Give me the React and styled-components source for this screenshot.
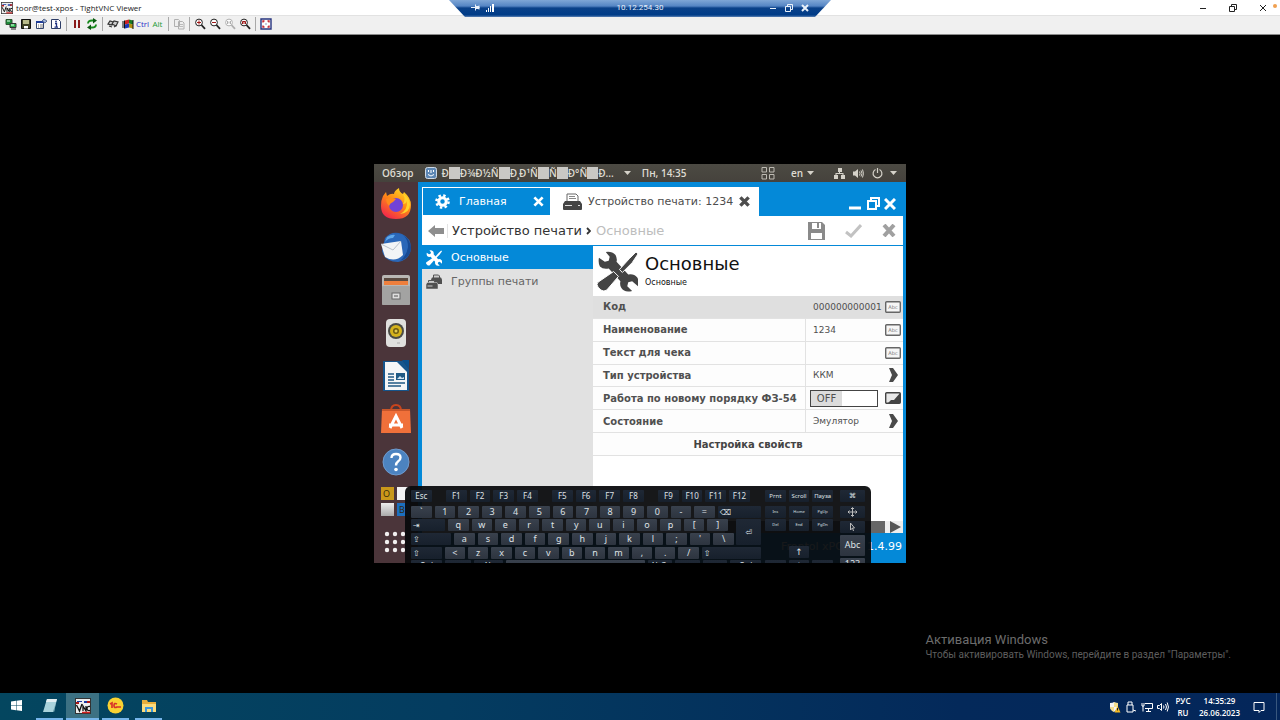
import React, { useState } from "react";
import styled, { createGlobalStyle } from "styled-components";

const GlobalStyle = createGlobalStyle`
  * {
    box-sizing: border-box;
  }
  body {
    margin: 0;
    background: #000;
    font-family: "Open Sans", "Noto Sans", sans-serif;
  }
  button, input {
    margin: 0;
    padding: 0;
    border: 0;
    background: none;
    color: inherit;
    font: inherit;
  }
  svg {
    display: block;
    flex: none;
  }
`;

/* ---------- viewer window ---------- */

const Page = styled.div`
  position: relative;
  display: flex;
  flex-direction: column;
  min-height: 100vh;
  overflow: hidden;
`;

const TitleBar = styled.header`
  display: flex;
  align-items: center;
  height: 15px;
  padding: 0 3px 0 1px;
  background: #fff;
  color: #222;
  font-size: 8px;
  line-height: 15px;
`;

const TitleText = styled.span`
  flex: 1;
  padding-left: 3px;
`;

const BusyDot = styled.span`
  align-self: flex-start;
  width: 4px;
  height: 4px;
  margin: 4px 0 0 -5px;
  border-radius: 50%;
  background: #f0a050;
`;

const WindowButton = styled.button`
  display: flex;
  align-items: center;
  justify-content: center;
  width: ${(props) => props.$width || "30px"};
  height: 15px;
`;

const Toolbar = styled.div`
  display: flex;
  align-items: center;
  height: 20px;
  padding: 0 3px 2px;
  background: #f0f0f0;
  border-top: 1px solid #e2e2e2;
  border-bottom: 1px solid #8a8a8a;
`;

const ToolButton = styled.button`
  display: flex;
  align-items: center;
  justify-content: center;
  width: 15px;
  height: 16px;
  color: ${(props) => props.$color || "#000"};
  font-size: 8px;
  line-height: 16px;
`;

const Separator = styled.span`
  width: 6px;
  height: 14px;
  background: linear-gradient(#a8a8a8, #a8a8a8) center / 1px 100% no-repeat;
`;

const ConnectionBar = styled.div`
  position: absolute;
  top: 0;
  left: 50%;
  display: flex;
  align-items: center;
  gap: 4px;
  width: 382px;
  height: 17px;
  padding: 0 20px 2px;
  transform: translateX(-50%);
  clip-path: polygon(0 0, 100% 0, 366px 100%, 16px 100%);
  background: linear-gradient(#7fa6d6 0, #5585c4 6px, #0a4189 8px, #003c88 15px, #5c82b4 17px);
  color: #e8f0fa;
  font-family: Roboto, sans-serif;
  font-size: 8px;
`;

const Address = styled.span`
  flex: 1;
  padding-left: 18px;
  text-align: center;
`;

const Screen = styled.main`
  display: flex;
  flex: 1;
  align-items: center;
  justify-content: center;
  padding-bottom: 1px;
  background: #000;
`;

const Watermark = styled.div`
  position: absolute;
  right: 49px;
  bottom: 58px;
  color: #5e5e5e;
  font-family: Roboto, sans-serif;
  font-size: 10px;
  line-height: 15px;
`;

const WatermarkTitle = styled.div`
  color: #6c6c6c;
  font-size: 13px;
`;

/* ---------- remote desktop ---------- */

const Remote = styled.section`
  position: relative;
  display: flex;
  flex-direction: column;
  width: 532px;
  overflow: hidden;
  background: #0489d8;
`;

const Panel = styled.div`
  display: flex;
  align-items: center;
  height: 18px;
  padding: 0 9px 0 8px;
  background: linear-gradient(#4c4a43, #45423c);
  color: #dedbd2;
  font-size: 10px;
  font-weight: 600;
`;

const PanelButton = styled.button`
  display: flex;
  align-items: center;
  gap: 4px;
  height: 18px;
  margin-left: ${(props) => props.$gap || "0"};
  white-space: nowrap;
`;

const AppName = styled.span`
  display: flex;
  align-items: center;
`;

const Missing = styled.span`
  width: 11px;
  height: 12px;
  background: #c9c8c4;
`;

const Desktop = styled.div`
  display: flex;
  height: 381px;
`;

const Dock = styled.nav`
  display: flex;
  flex-direction: column;
  align-items: center;
  width: 44px;
  background: #4b353a;
`;

const DockButton = styled.button`
  display: flex;
  align-items: center;
  justify-content: center;
  width: 44px;
  height: 43px;
`;

const Workspaces = styled.div`
  display: grid;
  grid-template-columns: 13px 13px;
  grid-auto-rows: 13px;
  gap: 3px;
  align-self: flex-start;
  margin: 4px 0 0 7px;
`;

const Workspace = styled.span`
  background: ${(props) => props.$color};
  color: #33270a;
  font-size: 9px;
  line-height: 13px;
  padding-left: 2px;
`;

const Window = styled.div`
  display: flex;
  flex: 1;
  flex-direction: column;
  min-width: 0;
  padding: 5px 3px 0 4px;
  background: #0489d8;
  font-family: "DejaVu Sans", sans-serif;
`;

const TabStrip = styled.div`
  display: flex;
  height: 29px;
`;

const Tab = styled.div`
  display: flex;
  align-items: center;
  width: ${(props) => props.$width};
  padding: ${(props) => (props.$active ? "0 8px 0 10px" : "0 6px 0 12px")};
  border: 1px solid #fff;
  background: ${(props) => (props.$active ? "#fff" : "#0489d8")};
  color: ${(props) => (props.$active ? "#4d4d4d" : "#fff")};
  font-size: 11px;
`;

const TabTitle = styled.button`
  display: flex;
  flex: 1;
  align-items: center;
  gap: ${(props) => props.$gap};
  white-space: nowrap;
`;

const WindowControls = styled.div`
  display: flex;
  flex: 1;
  align-items: center;
  justify-content: flex-end;
  gap: 4px;
  padding: 4px 7px 0 0;
`;

const Breadcrumbs = styled.div`
  display: flex;
  align-items: center;
  height: 29px;
  margin-bottom: 1px;
  padding: 0 7px 0 6px;
  background: #fff;
  color: #333;
  font-size: 13px;
`;

const Crumb = styled.a`
  color: ${(props) => (props.$muted ? "#bdbdbd" : "#333")};
  text-decoration: none;
`;

const BackButton = styled.button`
  padding-right: 3px;
  margin-right: 4px;
  border-right: 1px solid #e3e3e3;
`;

const CrumbArrow = styled.span`
  display: flex;
  justify-content: center;
  width: 14px;
`;

const Actions = styled.div`
  display: flex;
  align-items: center;
  gap: 20px;
  margin-left: auto;
`;

const Body = styled.div`
  display: flex;
  flex: 1;
`;

const Sidebar = styled.nav`
  width: 171px;
  background: #e1e1e1;
`;

const SidebarItem = styled.a`
  display: flex;
  align-items: center;
  gap: 9px;
  height: ${(props) => (props.$active ? "23px" : "25px")};
  padding-left: 4px;
  background: ${(props) => (props.$active ? "#0489d8" : "transparent")};
  color: ${(props) => (props.$active ? "#fff" : "#666")};
  font-size: 11px;
  text-decoration: none;
`;

const Content = styled.div`
  display: flex;
  flex: 1;
  flex-direction: column;
  background: #fff;
`;

const Heading = styled.div`
  display: flex;
  align-items: center;
  gap: 7px;
  height: 50px;
  padding-left: 4px;
  color: #111;
`;

const PageTitle = styled.h1`
  margin: 0;
  font-size: 18px;
  font-weight: 400;
  line-height: 24px;
`;

const Subtitle = styled.div`
  font-size: 8px;
  line-height: 14px;
`;

const Rows = styled.form`
  display: grid;
  grid-template-rows: repeat(7, 1fr);
  height: 160px;
`;

const Row = styled.div`
  display: grid;
  grid-template-columns: 1fr 98px;
  border-bottom: 1px solid #e2e2e2;
  background: ${(props) => (props.$selected ? "#dfdfdf" : "#fdfdfd")};
  color: #505050;
`;

const RowLabel = styled.label`
  align-self: center;
  padding-left: 10px;
  font-size: 10px;
  font-weight: 700;
`;

const Cell = styled.div`
  display: flex;
  align-items: center;
  justify-content: space-between;
  padding: 0 2px 0 7px;
  border-left: 1px solid ${(props) => (props.$selected ? "#dfdfdf" : "#e2e2e2")};
  font-size: 9px;
`;

const ValueInput = styled.input`
  width: 70px;
  outline: none;
`;

const PickerButton = styled.button`
  display: flex;
  flex: 1;
  align-items: center;
  justify-content: space-between;
  padding-right: 2px;
`;

const Switch = styled.span`
  position: relative;
  display: flex;
  width: 68px;
  height: 17px;
  margin-left: -3px;
  border: 1px solid #444;
  background: #fff;
`;

const SwitchInput = styled.input`
  position: absolute;
  inset: 0;
  width: 100%;
  height: 100%;
  opacity: 0;
`;

const SwitchText = styled.span`
  width: 31px;
  margin-left: ${(props) => (props.$on ? "auto" : "0")};
  background: #dcdcdc;
  font-size: 10px;
  line-height: 15px;
  text-align: center;
`;

const PropertiesButton = styled.button`
  border-bottom: 1px solid #e2e2e2;
  background: #fdfdfd;
  color: #444;
  font-size: 10px;
  font-weight: 700;
`;

const ScrollBar = styled.div`
  display: flex;
  justify-content: flex-end;
  gap: 2px;
  height: 12px;
  margin-top: auto;
  background: #eee;
`;

const Thumb = styled.span`
  width: 160px;
  background: #666;
`;

const Footer = styled.footer`
  height: 30px;
  padding-right: 1px;
  color: #fff;
  font-size: 11px;
  line-height: 28px;
  text-align: right;
`;

/* ---------- on-screen keyboard ---------- */

const Keyboard = styled.div`
  position: absolute;
  top: 322px;
  left: 31px;
  display: flex;
  align-items: flex-start;
  gap: 4px;
  width: 466px;
  height: 90px;
  padding: 4px 6px;
  border-radius: 6px;
  background: rgba(9, 10, 12, 0.94);
  font-family: "Noto Sans", "DejaVu Sans", sans-serif;
`;

const KeyBlock = styled.div`
  display: flex;
  flex-direction: column;
  justify-content: space-between;
  flex: ${(props) => (props.$width ? "none" : 1)};
  width: ${(props) => props.$width || "auto"};
  height: ${(props) => props.$height || "82px"};
  margin-left: ${(props) => props.$gap || "0"};
`;

const KeyRow = styled.div`
  display: flex;
  gap: 3px;
  padding-right: ${(props) => props.$end || "0"};
  margin-bottom: ${(props) => (props.$first ? "2px" : "0")};
`;

const KeySpace = styled.span`
  flex: ${(props) => props.$grow} 1 0;
  height: 12px;
`;

const Key = styled.button`
  flex: ${(props) => props.$grow || 1} 1 0;
  min-width: 0;
  height: ${(props) => props.$height || "12px"};
  padding: ${(props) => (props.$left ? "0 0 0 2px" : "0")};
  border-radius: 1px;
  background: ${(props) => (props.$dark ? "linear-gradient(#1f2835, #17202c)" : "linear-gradient(#39414d, #2d343f)")};
  color: #dfe2e6;
  font-size: ${(props) => props.$size || "9px"};
  line-height: 12px;
  text-align: ${(props) => (props.$left ? "left" : "center")};
  white-space: nowrap;
  overflow: hidden;
`;

const EnterGroup = styled.div`
  display: flex;
  gap: 2px;
`;

/* ---------- windows taskbar ---------- */

const Taskbar = styled.footer`
  display: flex;
  height: 27px;
  background: linear-gradient(90deg, #04465f, #043c60 35%, #04295a 75%, #04265a);
  color: #fff;
`;

const TaskButton = styled.button`
  display: flex;
  align-items: center;
  justify-content: center;
  width: ${(props) => (props.$active ? "33px" : "27px")};
  margin: 0 ${(props) => (props.$active ? "0" : "3px")};
  border-bottom: 2px solid ${(props) => (props.$open ? "#76b5ea" : "transparent")};
  background: ${(props) => (props.$active ? "#3c7183" : "transparent")};
`;

const Tray = styled.div`
  display: flex;
  align-items: center;
  gap: 4px;
  margin-left: auto;
  padding-right: 1px;
  font-size: 8px;
  line-height: 12px;
  text-align: center;
`;

const TrayText = styled.div`
  width: ${(props) => props.$width};
  font-weight: 600;
`;

const ShowDesktop = styled.button`
  width: 3px;
  height: 27px;
  border-left: 1px solid #38577e;
`;

/* ---------- drawings ---------- */

const VncLogo = ({ size = 12 }) => (
  <svg width={size} height={size} viewBox="0 0 16 16">
    <rect width="16" height="16" fill="#eee" />
    <path d="M0 0h16v16H0zM1 1v14h14V1z" fill="#333" fillRule="evenodd" />
    <path d="M2 3h5v1H2zm7 0h5v2H9z" fill="#1c3aa0" />
    <path d="M1 5h3M12 4h3" stroke="#b01818" strokeWidth="2" />
    <path d="M1.500 7l3 6 2.500-7M8 13V8l3 5V8M15 8.500q-3-.500-3 2t3 2" fill="none" stroke="#111" strokeWidth="1.300" />
    <path d="M7 14.500h8" stroke="#d42222" strokeWidth="1.500" />
  </svg>
);

const Glyph = ({ size = 12, children, box = 12 }) => (
  <svg width={size} height={size} viewBox={`0 0 ${box} ${box}`} fill="none" stroke="currentColor">
    {children}
  </svg>
);

const NewConnectionIcon = () => (
  <Glyph>
    <path d="M1 1.500h6v5H1z" fill="#1c8a3a" stroke="#2f5530" />
    <path d="M5 5.500h6v4H5z" fill="#27b04a" stroke="#333" />
    <path d="M2 3h3M6 7h3" stroke="#eaffea" />
    <path d="M6 11h5" stroke="#222" />
  </Glyph>
);

const SaveIcon = () => (
  <Glyph>
    <path d="M1.500 1.500h9v9h-9z" fill="#3e4022" stroke="#111" />
    <path d="M3 2h6v4H3z" fill="#b9bb8a" stroke="none" />
    <path d="M4 8h4v2.500H4z" fill="#fff" stroke="none" />
  </Glyph>
);

const OptionsIcon = () => (
  <Glyph>
    <path d="M1.500 3.500h7v7h-7z" fill="#fff" stroke="#34466e" />
    <path d="M1 4h8" stroke="#1d3b9a" strokeWidth="2" />
    <path d="M3 7h1m1 0h3M3 9h1m1 0h3" stroke="#777" />
    <path d="M7 3l2-2 3 2-2 2z" fill="#9cb0d8" stroke="#34466e" strokeWidth=".7" />
  </Glyph>
);

const InfoIcon = () => (
  <Glyph>
    <path d="M1.500 1.500h7l2 2v7h-9z" fill="#fff" stroke="#2c3c66" />
    <path d="M5 5.500h1.500v3.500M4.500 9.200h3.500" stroke="#1d2f80" strokeWidth="1.300" />
    <circle cx="6" cy="3.500" r=".9" fill="#1d2f80" stroke="none" />
  </Glyph>
);

const RefreshIcon = () => (
  <Glyph>
    <path d="M2 5.500q0-3 4-3h2" stroke="#168a1c" strokeWidth="1.800" />
    <path d="M10 6.500q0 3-4 3H4" stroke="#168a1c" strokeWidth="1.800" />
    <path d="M7 0l4 2.500-4 3zM5 6.500v5.500L1 9.500z" fill="#0c5a12" stroke="none" />
  </Glyph>
);

const KeysIcon = () => (
  <Glyph>
    <path d="M1 6l2-3 3 1-1 3zM5 6l2-3 4 1-2 4zM2 8l3 1M7 9l3-2" stroke="#333" strokeWidth="1.200" fill="#ccc" />
  </Glyph>
);

const FlagIcon = () => (
  <Glyph>
    <path d="M3 2.500l4-1v4l-4 1z" fill="#c22" stroke="none" />
    <path d="M7 1.500l4 1v4l-4-1z" fill="#177a22" stroke="none" />
    <path d="M3 6.500l4-1v4l-4 1z" fill="#1c36b4" stroke="none" />
    <path d="M7 5.500l4 1v4l-4-1z" fill="#b08d10" stroke="none" />
    <path d="M1 3v7M2.500 2.500v8M11 2v9" stroke="#111" />
  </Glyph>
);

const CopyIcon = () => (
  <Glyph>
    <path d="M1.500 1.500h4l1 1v6h-5zM5.500 3.500h4l1.500 1.500v6H5.500z" fill="#eee" stroke="#b0b0b0" />
    <path d="M7 6.500h3M7 8.500h3" stroke="#bbb" />
  </Glyph>
);

const LensIcon = ({ color = "#222", mark }) => (
  <Glyph>
    <circle cx="5" cy="4.500" r="3.400" fill="#fff" stroke={color} />
    <path d="M7.500 7L11 10.800" stroke={color} strokeWidth="1.800" />
    <path d={mark} stroke={color === "#222" ? "#a01818" : color} />
  </Glyph>
);

const FullScreenIcon = () => (
  <Glyph>
    <path d="M1 1h10v10H1z" fill="#fff" stroke="#26337e" strokeWidth="1.400" />
    <path d="M3 4.500V3h1.500M7.500 3H9v1.500M9 7.500V9H7.500M4.500 9H3V7.500" stroke="#c41f2d" strokeWidth="1.400" />
    <path d="M5.500 6h1" stroke="#26337e" />
  </Glyph>
);

const Minimize = () => (
  <Glyph size={8} box={8}>
    <path d="M1 4.500h6" />
  </Glyph>
);

const Restore = () => (
  <Glyph size={8} box={8}>
    <path d="M.5 2.500h5v5h-5zM2.500 2.500v-2h5v5h-2" />
  </Glyph>
);

const Cross = ({ size = 8, weight = 1 }) => (
  <Glyph size={size} box={8}>
    <path d="M1 1l6 6M7 1L1 7" strokeWidth={weight} />
  </Glyph>
);

const Caret = () => (
  <svg width="7" height="4" viewBox="0 0 7 4">
    <path d="M0 0h7L3.500 4z" fill="#d5d2c9" />
  </svg>
);

const GearIcon = () => (
  <svg width="15" height="15" viewBox="0 0 16 16" fill="none" stroke="#fff">
    <circle cx="8" cy="8" r="4" strokeWidth="3.200" />
    <circle cx="8" cy="8" r="6.500" strokeWidth="2.600" strokeDasharray="2.600 2.500" />
  </svg>
);

const PrinterIcon = () => (
  <svg width="21" height="18" viewBox="0 0 21 18">
    <path d="M5 8V1h9l2 2v5" fill="#fff" stroke="#666" />
    <path d="M7 3.500h6M7 5.500h7" stroke="#888" />
    <path d="M3 8h15l2 3v5q0 1-1 1H2q-1 0-1-1v-5z" fill="#444" />
    <path d="M3 12.500h7M16 12.500h2" stroke="#ddd" />
  </svg>
);

const PrintersIcon = () => (
  <svg width="16" height="16" viewBox="0 0 16 16">
    <path d="M7.500 4V1h5l1 1v2" fill="#ccc" stroke="#555" />
    <path d="M6 3.500h9l1 2V10H5V5.500z" fill="#505050" />
    <path d="M2.500 9V6.500h6V9" fill="#ccc" stroke="#555" />
    <path d="M1 8.500h10l1 2V15H0v-4.500z" fill="#505050" stroke="#e1e1e1" strokeWidth=".5" />
    <path d="M1.500 12h5" stroke="#ccc" />
  </svg>
);

const ToolsIcon = ({ size, color, edge = "none" }) => (
  <svg width={size} height={size} viewBox="0 0 42 42" fill={color}>
    <path d="M2 7l6 4 4-1 1-4-4-5q6-1 10 3 2 4 1 7l12 13q6-1 9 3 3 4 1 9l-6-5-4 1-1 4 5 5q-8 2-11-3-2-3-1-7L12 18q-6 1-9-2-2-4-1-9z" />
    <path d="M40 1l2 2-6 9-10 10-3-3 10-11z" stroke={edge} />
    <path d="M17 21l5 5-12 14q-3 2-6 0l-3-3q-2-3 0-5z" stroke={edge} />
  </svg>
);

const BackIcon = () => (
  <svg width="16" height="14" viewBox="0 0 16 14">
    <path d="M0 7l7-6v3h9v6H7v3z" fill="#8e8e8e" />
  </svg>
);

const DiskIcon = () => (
  <svg width="17" height="18" viewBox="0 0 17 18">
    <path d="M0 0h14l3 3v15H0z" fill="#8a8a8a" />
    <path d="M4 1h9v6H4zM3 11h11v6H3z" fill="#fff" />
    <path d="M9 1h2v5H9z" fill="#8a8a8a" />
  </svg>
);

const CheckIcon = () => (
  <svg width="17" height="14" viewBox="0 0 17 14">
    <path d="M1 8l5 4L16 1" fill="none" stroke="#c2c2c2" strokeWidth="3" />
  </svg>
);

const ChevronIcon = () => (
  <svg width="10" height="14" viewBox="0 0 10 14">
    <path d="M0 0h4l5 7-5 7H0l3-7z" fill="#4a4a4a" />
  </svg>
);

const AbcIcon = () => (
  <svg width="16" height="12" viewBox="0 0 16 12">
    <rect x=".7" y=".7" width="14.600" height="10.600" rx="1" fill="#f6f6f6" stroke="#666" strokeWidth="1.400" />
    <text x="8" y="8" fontSize="5" textAnchor="middle" fill="#777">Abc</text>
  </svg>
);

const ToggleIcon = () => (
  <svg width="16" height="12" viewBox="0 0 16 12">
    <rect x=".7" y=".7" width="14.600" height="10.600" rx="1" fill="#e8e8e8" stroke="#444" strokeWidth="1.400" />
    <path d="M15 1v10H3l3-3h3z" fill="#444" />
  </svg>
);

const FirefoxIcon = () => (
  <svg width="32" height="32" viewBox="0 0 32 32">
    <defs>
      <linearGradient id="fx" x1=".8" y1="0" x2=".2" y2="1">
        <stop offset="0" stopColor="#ffe226" />
        <stop offset=".45" stopColor="#ff8a16" />
        <stop offset="1" stopColor="#f0204f" />
      </linearGradient>
    </defs>
    <path d="M3 8l3-4 1 4q4-3 7-2 0-3 5-6 0 4 4 6l1-2q7 6 7 13 0 14-15 14T1 18q0-6 2-10z" fill="url(#fx)" />
    <circle cx="16" cy="17" r="7" fill="#7142d6" />
    <path d="M6 11q5-2 10 0l-3 3q-3 1-4 4-3-3-3-7z" fill="#ff8a1c" />
    <path d="M23 6q3 5 0 10 3 0 4-3 1 9-7 13 10-1 10-10-1-7-7-10z" fill="#ffd22b" />
  </svg>
);

const MailIcon = () => (
  <svg width="32" height="32" viewBox="0 0 32 32">
    <path d="M5 7Q12-1 22 3q9 4 9 14-1 12-13 14Q5 31 2 20z" fill="#2a67b8" />
    <path d="M14 2q14 0 14 14-1 8-8 14 11-3 11-14Q29 3 14 2z" fill="#184a94" />
    <path d="M7 6q5-3 8-2l-2 3q-5 0-8 4z" fill="#5fa8ea" />
    <path d="M1 13l20-3 2 14q-8 8-18 2z" fill="#f2f4f6" />
    <path d="M1 13l12 6 8-9" fill="none" stroke="#b7c0ca" />
  </svg>
);

const FilesIcon = () => (
  <svg width="30" height="32" viewBox="0 0 30 32">
    <rect x="1" y="1" width="28" height="30" rx="2" fill="#b9b7b4" />
    <path d="M3 4h24v3H3z" fill="#5b4a40" />
    <path d="M3 7h24v4H3z" fill="#ee7f3d" />
    <rect x="1" y="12" width="28" height="19" rx="1" fill="#a3a3a2" />
    <rect x="11" y="19" width="8" height="6" fill="#dedede" stroke="#666" />
    <path d="M13 22h4" stroke="#555" />
  </svg>
);

const SpeakerIcon = () => (
  <svg width="22" height="30" viewBox="0 0 22 30">
    <rect x="1" y="1" width="20" height="28" rx="4" fill="#e0e0de" />
    <circle cx="11" cy="13" r="8" fill="#4a4b46" />
    <circle cx="11" cy="13" r="6" fill="#d4b21c" />
    <circle cx="11" cy="13" r="3" fill="#6e5c12" />
    <circle cx="11" cy="13" r="1.500" fill="#e4cc50" />
    <path d="M12 25h3" stroke="#aaa" />
  </svg>
);

const WriterIcon = () => (
  <svg width="28" height="32" viewBox="0 0 28 32">
    <path d="M1 1h20l6 8v22H1z" fill="#16558c" />
    <path d="M20 0h7v9z" fill="#0b4f8c" />
    <path d="M3 2h12l10 10v18H3z" fill="#f5f6f7" />
    <path d="M6 14h6M6 17h6M6 20h6M6 23h17M6 26h13" stroke="#205a85" strokeWidth="1.600" />
    <path d="M14 13h9v7h-9z" fill="#205a85" />
    <path d="M15 19l3-3 2 2 2-1v2z" fill="#d2e4f2" />
  </svg>
);

const StoreIcon = () => (
  <svg width="30" height="32" viewBox="0 0 30 32">
    <path d="M10 8q0-6 5-6t5 6" fill="none" stroke="#c9441c" strokeWidth="2" />
    <path d="M1 6h28l1 24H0z" fill="#f0703a" />
    <path d="M1 6h28v2H1z" fill="#c7562a" />
    <path d="M9 25l6-12 6 12M8 22h14" fill="none" stroke="#fff" strokeWidth="3" />
  </svg>
);

const HelpIcon = () => (
  <svg width="28" height="28" viewBox="0 0 28 28">
    <circle cx="14" cy="14" r="13" fill="#4c83c0" stroke="#6f9bce" />
    <path d="M9.500 10q0-4 4.500-4t4.500 3.500q0 2.500-2.500 4-2 1.500-2 4" fill="none" stroke="#fff" strokeWidth="2.400" />
    <circle cx="14" cy="21.500" r="1.800" fill="#fff" />
  </svg>
);

const AppsGridIcon = () => (
  <svg width="22" height="22" viewBox="0 0 22 22" fill="#f2f0f0">
    {[3, 11, 19].map((y) =>
      [3, 11, 19].map((x) => <circle key={`${x}-${y}`} cx={x} cy={y} r="2.200" />)
    )}
  </svg>
);

const AppsWrap = styled.button`
  align-self: flex-start;
  margin: 15px 0 0 10px;
`;

/* ---------- parts ---------- */

const ViewerToolbar = () => (
  <Toolbar>
    <ToolButton aria-label="New connection"><NewConnectionIcon /></ToolButton>
    <ToolButton aria-label="Save"><SaveIcon /></ToolButton>
    <ToolButton aria-label="Options"><OptionsIcon /></ToolButton>
    <ToolButton aria-label="Info"><InfoIcon /></ToolButton>
    <Separator />
    <ToolButton aria-label="Pause">
      <Glyph><path d="M4 2v8M8 2v8" stroke="#8a1a1a" strokeWidth="2" /></Glyph>
    </ToolButton>
    <ToolButton aria-label="Refresh"><RefreshIcon /></ToolButton>
    <Separator />
    <ToolButton aria-label="Ctrl Alt Del"><KeysIcon /></ToolButton>
    <ToolButton aria-label="Start"><FlagIcon /></ToolButton>
    <ToolButton $color="#2a30c8">Ctrl</ToolButton>
    <ToolButton $color="#1c9a35">Alt</ToolButton>
    <Separator />
    <ToolButton aria-label="Transfer files"><CopyIcon /></ToolButton>
    <Separator />
    <ToolButton aria-label="Zoom in"><LensIcon mark="M3 4.500h4M5 2.500v4" /></ToolButton>
    <ToolButton aria-label="Zoom out"><LensIcon mark="M3 4.500h4" /></ToolButton>
    <ToolButton aria-label="Zoom 100%"><LensIcon color="#b0b0b0" mark="M3.500 3v3M5 3.500v2M6.500 3v3" /></ToolButton>
    <ToolButton aria-label="Zoom auto"><LensIcon mark="M3.500 6V3.500h3V6M3.500 5h3" /></ToolButton>
    <Separator />
    <ToolButton aria-label="Full screen"><FullScreenIcon /></ToolButton>
  </Toolbar>
);

const TopPanel = () => (
  <Panel>
    <PanelButton>Обзор</PanelButton>
    <PanelButton $gap="12px">
      <svg width="12" height="12" viewBox="0 0 12 12">
        <rect x=".5" y=".5" width="11" height="11" rx="2" fill="#5d87b4" stroke="#cfdbe8" />
        <path d="M3.500 3v2M8.500 3v2M6 3v3M3 7.500q3 3 6 0" stroke="#fff" fill="none" />
      </svg>
      <AppName>
        Ð<Missing />Ð¾Ð½Ñ<Missing />Ð¸Ð¹Ñ<Missing />Ñ<Missing />Ð°Ñ<Missing />Ð...
      </AppName>
    </PanelButton>
    <PanelButton $gap="10px" aria-label="App menu"><Caret /></PanelButton>
    <PanelButton $gap="11px">Пн, 14:35</PanelButton>
    <PanelButton $gap="auto" aria-label="Workspaces">
      <svg width="14" height="13" viewBox="0 0 14 13" fill="none" stroke="#bdbab2">
        <path d="M1 .5h4.500v4.500H1zM8.500.5H13v4.500H8.500zM1 7.500h4.500V12H1zM8.500 7.500H13V12H8.500z" />
      </svg>
    </PanelButton>
    <PanelButton $gap="16px">en <Caret /></PanelButton>
    <PanelButton $gap="20px" aria-label="System">
      <svg width="11" height="11" viewBox="0 0 11 11" fill="#d5d2c9">
        <path d="M4 0h4v4H4zM0 7h4v4H0zM7 7h4v4H7zM1.500 5h8v2h-1V6h-6v1h-1zM5 4h1v2H5z" />
      </svg>
    </PanelButton>
    <PanelButton $gap="8px" aria-label="Volume">
      <svg width="11" height="11" viewBox="0 0 11 11" fill="none" stroke="#d5d2c9">
        <path d="M0 3.500h2l3-2.500v9L2 7.500H0z" fill="#d5d2c9" stroke="none" />
        <path d="M6.500 3.500q1.200 2 0 4M8 2.500q2 3 0 6M9.500 1.500q2 4 0 8" />
      </svg>
    </PanelButton>
    <PanelButton $gap="8px" aria-label="Power">
      <svg width="11" height="11" viewBox="0 0 11 11" fill="none" stroke="#d5d2c9" strokeWidth="1.200">
        <path d="M3.500 1.500a4.400 4.400 0 1 0 4 0M5.500 0v5" />
      </svg>
    </PanelButton>
    <PanelButton $gap="7px" aria-label="System menu"><Caret /></PanelButton>
  </Panel>
);

const dockApps = [
  { name: "Firefox", Icon: FirefoxIcon },
  { name: "Thunderbird", Icon: MailIcon },
  { name: "Files", Icon: FilesIcon },
  { name: "Rhythmbox", Icon: SpeakerIcon },
  { name: "Writer", Icon: WriterIcon },
  { name: "Software", Icon: StoreIcon },
  { name: "Help", Icon: HelpIcon },
];

const SideDock = () => (
  <Dock>
    {dockApps.map(({ name, Icon }) => (
      <DockButton key={name} aria-label={name}><Icon /></DockButton>
    ))}
    <Workspaces>
      <Workspace $color="#c9981a">O</Workspace>
      <Workspace $color="#f4f4f4" />
      <Workspace $color="linear-gradient(#eee, #aaa)" />
      <Workspace $color="#1b6fc0">B</Workspace>
    </Workspaces>
    <AppsWrap aria-label="Applications"><AppsGridIcon /></AppsWrap>
  </Dock>
);

const InputRow = ({ id, label, value, selected }) => (
  <Row $selected={selected}>
    <RowLabel htmlFor={id}>{label}</RowLabel>
    <Cell $selected={selected}>
      <ValueInput id={id} defaultValue={value} />
      <AbcIcon />
    </Cell>
  </Row>
);

const PickerRow = ({ id, label, value }) => (
  <Row>
    <RowLabel htmlFor={id}>{label}</RowLabel>
    <Cell>
      <PickerButton type="button" id={id}>{value}<ChevronIcon /></PickerButton>
    </Cell>
  </Row>
);

const DeviceForm = () => {
  const [on, setOn] = useState(false);

  return (
    <Rows>
      <InputRow id="code" label="Код" value="000000000001" selected />
      <InputRow id="name" label="Наименование" value="1234" />
      <InputRow id="receipt" label="Текст для чека" value="" />
      <PickerRow id="type" label="Тип устройства" value="ККМ" />
      <Row>
        <RowLabel htmlFor="fz54">Работа по новому порядку ФЗ-54</RowLabel>
        <Cell>
          <Switch>
            <SwitchText $on={on}>{on ? "ON" : "OFF"}</SwitchText>
            <SwitchInput id="fz54" type="checkbox" checked={on} onChange={() => setOn(!on)} />
          </Switch>
          <ToggleIcon />
        </Cell>
      </Row>
      <PickerRow id="state" label="Состояние" value="Эмулятор" />
      <PropertiesButton type="button">Настройка свойств</PropertiesButton>
    </Rows>
  );
};

const AppWindow = () => (
  <Window>
    <TabStrip>
      <Tab $width="129px">
        <TabTitle $gap="9px"><GearIcon />Главная</TabTitle>
        <button aria-label="Закрыть"><Cross size={11} weight={2} /></button>
      </Tab>
      <Tab $width="208px" $active>
        <TabTitle $gap="5px"><PrinterIcon />Устройство печати: 1234</TabTitle>
        <button aria-label="Закрыть"><Cross size={11} weight={2.5} /></button>
      </Tab>
      <WindowControls>
        <WindowButton $width="14px" aria-label="Свернуть">
          <svg width="12" height="12"><path d="M0 10h12" stroke="#fff" strokeWidth="3" /></svg>
        </WindowButton>
        <WindowButton $width="14px" aria-label="Развернуть">
          <svg width="13" height="13" fill="none" stroke="#fff" strokeWidth="2">
            <path d="M1 4h8v8H1zM4 3V1h8v8h-2" />
          </svg>
        </WindowButton>
        <button aria-label="Закрыть">
          <svg width="12" height="12"><path d="M1 1l10 10M11 1L1 11" stroke="#fff" strokeWidth="3" /></svg>
        </button>
      </WindowControls>
    </TabStrip>
    <Breadcrumbs>
      <BackButton aria-label="Назад"><BackIcon /></BackButton>
      <Crumb href="#device">Устройство печати</Crumb>
      <CrumbArrow>
        <svg width="5" height="8" viewBox="0 0 5 8"><path d="M1 1l3 3-3 3" fill="none" stroke="#333" strokeWidth="1.800" /></svg>
      </CrumbArrow>
      <Crumb href="#main" $muted>Основные</Crumb>
      <Actions>
        <button aria-label="Сохранить"><DiskIcon /></button>
        <button aria-label="Применить"><CheckIcon /></button>
        <button aria-label="Отменить">
          <svg width="14" height="13"><path d="M2 1l10 11M12 1L2 12" stroke="#a0a0a0" strokeWidth="4" /></svg>
        </button>
      </Actions>
    </Breadcrumbs>
    <Body>
      <Sidebar>
        <SidebarItem href="#main" $active><ToolsIcon size={16} color="#fff" />Основные</SidebarItem>
        <SidebarItem href="#groups"><PrintersIcon />Группы печати</SidebarItem>
      </Sidebar>
      <Content>
        <Heading>
          <ToolsIcon size={41} color="#444" edge="#fff" />
          <div>
            <PageTitle>Основные</PageTitle>
            <Subtitle>Основные</Subtitle>
          </div>
        </Heading>
        <DeviceForm />
        <ScrollBar>
          <Thumb />
          <svg width="16" height="12" viewBox="0 0 16 12"><path d="M3 0l11 6-11 6z" fill="#555" /></svg>
        </ScrollBar>
      </Content>
    </Body>
    <Footer>Frontol xPOS v. 1.4.99</Footer>
  </Window>
);

const keys = (text) => text.split(" ").map((k) => <Key key={k}>{k}</Key>);
const darkKeys = (text, size) =>
  text.split(" ").map((k) => <Key key={k} $dark $size={size}>{k}</Key>);

const ScreenKeyboard = () => (
  <Keyboard>
    <KeyBlock $width="350px">
      <KeyRow $first>
        <Key $dark $size="8px">Esc</Key>
        <KeySpace $grow={0.4} />
        {darkKeys("F1 F2 F3 F4", "8px")}
        <KeySpace $grow={0.4} />
        {darkKeys("F5 F6 F7 F8", "8px")}
        <KeySpace $grow={0.4} />
        {darkKeys("F9 F10 F11 F12", "8px")}
        <KeySpace $grow={0.4} />
      </KeyRow>
      <KeyRow>
        {keys("` 1 2 3 4 5 6 7 8 9 0 - =")}
        <Key $dark $left $grow={2} $size="8px">⌫</Key>
      </KeyRow>
      <EnterGroup>
        <KeyBlock $width="323px" $height="26px">
          <KeyRow $end="6px">
            <Key $dark $left $grow={1.55} $size="8px">⇥</Key>
            {keys("q w e r t y u i o p [ ]")}
          </KeyRow>
          <KeyRow>
            <Key $dark $left $grow={1.85} $size="8px">⇪</Key>
            {keys("a s d f g h j k l ; ' \\")}
          </KeyRow>
        </KeyBlock>
        <Key $dark $height="26px" $size="8px">⏎</Key>
      </EnterGroup>
      <KeyRow>
        <Key $dark $left $grow={1.4} $size="8px">⇧</Key>
        {keys("< z x c v b n m , . /")}
        <Key $dark $left $grow={2.8} $size="8px">⇧</Key>
      </KeyRow>
      <KeyRow>
        <Key $dark $grow={1.5} $size="8px">Ctrl</Key>
        <Key $dark $grow={1.3} $size="8px">❖</Key>
        <Key $dark $grow={1.4} $size="8px">Alt</Key>
        <Key $grow={6.8} />
        <Key $dark $grow={1.2} $size="8px">AltGr</Key>
        <Key $dark $grow={1.2} $size="8px">❖</Key>
        <Key $dark $grow={1.2} $size="8px">☰</Key>
        <Key $dark $grow={1.5} $size="8px">Ctrl</Key>
      </KeyRow>
    </KeyBlock>
    <KeyBlock $width="68px">
      <KeyRow $first>{darkKeys("Prnt Scroll Пауза", "6px")}</KeyRow>
      <KeyRow>{darkKeys("Ins Home PgUp", "4px")}</KeyRow>
      <KeyRow>{darkKeys("Del End PgDn", "4px")}</KeyRow>
      <KeyRow><KeySpace $grow={1} /></KeyRow>
      <KeyRow><KeySpace $grow={1} /><Key $dark>↑</Key><KeySpace $grow={1} /></KeyRow>
      <KeyRow>{darkKeys("← ↓ →")}</KeyRow>
    </KeyBlock>
    <KeyBlock $gap="3px" $height="80px">
      <KeyRow $first><Key $dark $size="7px">⌘</Key></KeyRow>
      <KeyRow>
        <Key $dark aria-label="Move">
          <svg width="100%" height="10" viewBox="0 0 10 10" fill="none" stroke="#bbb">
            <path d="M5 1v8M1 5h8" />
            <path d="M3.500 2L5 .5 6.500 2M3.500 8L5 9.500 6.500 8M2 3.500L.5 5 2 6.500M8 3.500L9.500 5 8 6.500" />
          </svg>
        </Key>
      </KeyRow>
      <KeyRow>
        <Key $dark aria-label="Pointer">
          <svg width="100%" height="10" viewBox="0 0 10 10" fill="none" stroke="#bbb">
            <path d="M3 1v7l2-2 1 3M3 1l4 5H5" />
          </svg>
        </Key>
      </KeyRow>
      <KeyRow><Key $height="21px">Abc</Key></KeyRow>
      <KeyRow><Key>123</Key></KeyRow>
    </KeyBlock>
  </Keyboard>
);

const WindowsTaskbar = () => (
  <Taskbar>
    <TaskButton aria-label="Пуск">
      <svg width="11" height="11" viewBox="0 0 11 11" fill="#fff">
        <path d="M0 1.500l5-.7v4.400H0zM5.500.7L11 0v5.200H5.500zM0 5.800h5v4.400l-5-.7zM5.500 5.800H11V11l-5.500-.7z" />
      </svg>
    </TaskButton>
    <TaskButton $open aria-label="Блокнот">
      <svg width="16" height="15" viewBox="0 0 16 15">
        <path d="M5 1h10l-3 13H1z" fill="#a9d3dc" />
        <path d="M5 1h10l-1 3H4z" fill="#e3eff2" />
        <path d="M13 8l2-7-4 13h1z" fill="#4f8997" />
      </svg>
    </TaskButton>
    <TaskButton $open $active aria-label="TightVNC"><VncLogo size={16} /></TaskButton>
    <TaskButton $open aria-label="1С">
      <svg width="17" height="17" viewBox="0 0 17 17">
        <circle cx="8.500" cy="8.500" r="8" fill="#f9d232" />
        <path d="M3 7l2-1v5M10 7q-3-1.500-3 1.500t3 1.500h4" fill="none" stroke="#d8342a" strokeWidth="1.700" />
      </svg>
    </TaskButton>
    <TaskButton $open aria-label="Проводник">
      <svg width="16" height="14" viewBox="0 0 16 14">
        <path d="M1 1h5l1 2h8v10H1z" fill="#e8ae3c" />
        <path d="M1 5h14v8H1z" fill="#fbdb7d" />
        <path d="M4 13V8h8v5h-2v-3H6v3z" fill="#3d97dc" />
      </svg>
    </TaskButton>
    <Tray>
      <svg width="12" height="12" viewBox="0 0 12 12">
        <path d="M1 2q3 0 4-1 2 1 4 1v4q-1 3-4 5-4-2-4-5z" fill="#f4f4f4" />
        <path d="M5 1v5H1q0 3 4 5V6h4V2Q6 2 5 1z" fill="#f3cf4a" opacity=".6" />
        <path d="M8.500 5l3 6.500h-6z" fill="#f5b921" />
        <path d="M8.500 7v2.500" stroke="#222" />
      </svg>
      <svg width="12" height="12" viewBox="0 0 12 12" fill="none" stroke="#fff">
        <path d="M3 4V1h4v3M2 4h6v7H2zM8 9l3 1" />
      </svg>
      <svg width="12" height="12" viewBox="0 0 12 12" fill="none" stroke="#fff">
        <path d="M4 2.500h7.500v5H4M1 2v3h2V2M2 5v5.500M5 10.500h5M7.500 8v2" />
      </svg>
      <svg width="12" height="12" viewBox="0 0 12 12" fill="none" stroke="#fff">
        <path d="M.5 4.500h2l2-2v7l-2-2h-2zM6.500 4.500q1 1.500 0 3M8.500 3q2 3 0 6M10.200 1.500q2.500 4.500 0 9" />
      </svg>
      <TrayText $width="20px">РУС<br />RU</TrayText>
      <TrayText $width="45px">14:35:29<br />26.06.2023</TrayText>
      <svg width="26" height="12" viewBox="0 0 26 12" fill="none" stroke="#fff">
        <path d="M8 1.500h10v8h-3l-2 2v-2H8z" />
      </svg>
      <ShowDesktop aria-label="Свернуть все окна" />
    </Tray>
  </Taskbar>
);

const App = () => {
  return (
    <Page>
      <GlobalStyle />
      <TitleBar>
        <VncLogo />
        <TitleText>toor@test-xpos - TightVNC Viewer</TitleText>
        <WindowButton aria-label="Minimize"><Minimize /></WindowButton>
        <WindowButton aria-label="Restore"><Restore /></WindowButton>
        <WindowButton aria-label="Close"><Cross /></WindowButton>
        <BusyDot />
      </TitleBar>
      <ViewerToolbar />
      <ConnectionBar>
        <WindowButton $width="13px" aria-label="Pin">
          <Glyph size={9} box={9}><path d="M0 4.500h4M4.500 1.500v6M4.500 4.500h4M8 2.500v4M5 3.500h3M5 5.500h3" /></Glyph>
        </WindowButton>
        <svg width="9" height="9" viewBox="0 0 9 9" fill="#fff"><path d="M0 7h1v2H0zM2 5h1v4H2zM4 3h1v6H4zM6 1h2v8H6z" /></svg>
        <Address>10.12.254.30</Address>
        <WindowButton $width="12px" aria-label="Minimize connection"><Minimize /></WindowButton>
        <WindowButton $width="12px" aria-label="Restore connection"><Restore /></WindowButton>
        <WindowButton $width="12px" aria-label="Close connection"><Cross weight={2} /></WindowButton>
      </ConnectionBar>
      <Screen>
        <Remote>
          <TopPanel />
          <Desktop>
            <SideDock />
            <AppWindow />
          </Desktop>
          <ScreenKeyboard />
        </Remote>
      </Screen>
      <Watermark>
        <WatermarkTitle>Активация Windows</WatermarkTitle>
        Чтобы активировать Windows, перейдите в раздел "Параметры".
      </Watermark>
      <WindowsTaskbar />
    </Page>
  );
};

export default App;
